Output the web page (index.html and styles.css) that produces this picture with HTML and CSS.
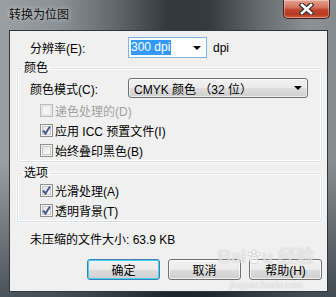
FILE: index.html
```html
<!DOCTYPE html>
<html lang="zh">
<head>
  <meta charset="UTF-8" />
  <title>转换为位图</title>
  <link rel="stylesheet" href="styles.css">
</head>
<body>
  <div class="window">
    <div class="titlebar">
      <span class="title">转换为位图</span>
      <button class="close">
        <svg width="15" height="12" viewBox="0 0 15 12">
          <path d="M3 2 L12 10 M12 2 L3 10" stroke="#3a3030" stroke-width="5" stroke-linecap="square" />
          <path d="M3 2 L12 10 M12 2 L3 10" stroke="#fff" stroke-width="2.6" stroke-linecap="square" />
        </svg>
      </button>
    </div>

    <div class="client">
      <div class="row res-row">
        <span class="label">分辨率(E):</span>
        <div class="combo-edit">
          <span class="sel-text">300 dpi</span>
          <span class="arrow"></span>
        </div>
        <span class="unit">dpi</span>
      </div>

      <fieldset class="group">
        <legend>颜色</legend>
        <div class="row mode-row">
          <span class="label">颜色模式(C):</span>
          <div class="combo-btn">
            <span>CMYK 颜色 （32 位）</span>
            <span class="arrow"></span>
          </div>
        </div>
        <div class="checks">
          <label class="check disabled"><span class="box"></span>递色处理的(D)</label>
          <label class="check">
            <span class="box">
              <svg width="11" height="11" viewBox="0 0 11 11"><path d="M2 5.5 L4.5 8.5 L9 1.5" fill="none" stroke="#4a5c8c" stroke-width="2" /></svg>
            </span>应用 ICC 预置文件(I)
          </label>
          <label class="check"><span class="box"></span>始终叠印黑色(B)</label>
        </div>
      </fieldset>

      <fieldset class="group options">
        <legend>选项</legend>
        <div class="checks">
          <label class="check">
            <span class="box">
              <svg width="11" height="11" viewBox="0 0 11 11"><path d="M2 5.5 L4.5 8.5 L9 1.5" fill="none" stroke="#4a5c8c" stroke-width="2" /></svg>
            </span>光滑处理(A)
          </label>
          <label class="check">
            <span class="box">
              <svg width="11" height="11" viewBox="0 0 11 11"><path d="M2 5.5 L4.5 8.5 L9 1.5" fill="none" stroke="#4a5c8c" stroke-width="2" /></svg>
            </span>透明背景(T)
          </label>
        </div>
      </fieldset>

      <div class="size-text">未压缩的文件大小: 63.9 KB</div>

      <div class="buttons">
        <button class="btn default">确定</button>
        <button class="btn">取消</button>
        <button class="btn">帮助(H)</button>
      </div>

      <!-- 水印 -->
      <div class="watermark">
        <span class="wm-big">Bai<svg class="paw" width="16" height="16" viewBox="0 0 16 16">
            <circle cx="4" cy="5" r="2" /><circle cx="8" cy="3" r="2" /><circle cx="12" cy="5" r="2" />
            <ellipse cx="8" cy="11" rx="4.5" ry="3.5" />
          </svg>u 经验</span>
        <span class="wm-small">jingyan.baidu.com</span>
      </div>
    </div>
  </div>
</body>
</html>
```

FILE: styles.css
```css
* {
  box-sizing: border-box;
}

body {
  margin: 0;
  width: 336px;
  height: 297px;
  overflow: hidden;
  font-family: "Liberation Sans", "Noto Sans CJK SC", sans-serif;
  font-size: 12px;
  color: #000;
}

.window {
  width: 336px;
  height: 297px;
  display: flex;
  flex-direction: column;
  background:
    linear-gradient(to bottom, rgba(0, 0, 0, 0) 0%, rgba(0, 0, 0, 0) 55%, rgba(10, 20, 30, 0.55) 100%),
    linear-gradient(to right, #9a9fa3 0%, #8a9094 18%, #5f656a 35%, #33383d 50%, #353a3f 62%, #676c71 78%, #8c9195 92%, #868b8f 100%);
}

.titlebar {
  height: 30px;
  display: flex;
  justify-content: space-between;
  align-items: flex-start;
}

.title {
  padding: 8px 0 0 9px;
  line-height: 14px;
  font-size: 12px;
  color: #101010;
  text-shadow: 0 0 5px rgba(255, 255, 255, 0.7);
}

.close {
  margin-right: 6px;
  width: 47px;
  height: 19px;
  padding: 0;
  border: 1px solid #3d2420;
  border-top: none;
  border-radius: 0 0 5px 5px;
  background: linear-gradient(to bottom, #e7a190 0%, #d47561 40%, #c0442c 55%, #b83a22 80%, #d0603f 100%);
  box-shadow: inset 0 0 0 1px rgba(255, 255, 255, 0.35);
  display: flex;
  align-items: center;
  justify-content: center;
}

.client {
  margin: 0 8px 5px 9px;
  flex: 1;
  border: 1px solid #30363c;
  background: #f0f0f0;
  padding: 0 5px 0 7px;
  display: flex;
  flex-direction: column;
  position: relative;
  overflow: hidden;
}

.row {
  display: flex;
  align-items: center;
}

.label {
  width: 98px;
  flex-shrink: 0;
}

.res-row {
  margin-top: 6px;
  height: 21px;
  padding-left: 13px;
}

.combo-edit {
  width: 79px;
  height: 21px;
  border: 1px solid #7eb4ea;
  background: #fff;
  display: flex;
  align-items: center;
  justify-content: space-between;
  padding: 0 5px 0 2px;
}

.sel-text {
  background: #3399ff;
  color: #fff;
  line-height: 15px;
  padding-right: 1px;
}

.arrow {
  width: 0;
  height: 0;
  border-left: 4px solid transparent;
  border-right: 4px solid transparent;
  border-top: 4px solid #000;
}

.unit {
  margin-left: 6px;
}

.group {
  margin: 3px 0 0 0;
  padding: 0;
  width: 305px;
  border: 1px solid #d5dfe5;
  border-radius: 3px;
  box-shadow: inset 0 0 0 1px #fff, 0 0 0 1px rgba(255, 255, 255, 0.7);
}

.group legend {
  margin-left: 4px;
  padding: 0 2px;
  line-height: 14px;
}

.mode-row {
  margin-top: 3px;
  padding-left: 12px;
  height: 20px;
}

.combo-btn {
  width: 180px;
  height: 20px;
  border: 1px solid #707070;
  border-radius: 3px;
  background: linear-gradient(to bottom, #f2f2f2 0%, #ebebeb 50%, #dddddd 51%, #cfcfcf 100%);
  box-shadow: inset 0 0 0 1px rgba(255, 255, 255, 0.6);
  display: flex;
  align-items: center;
  justify-content: space-between;
  padding: 0 5px 0 5px;
}

.checks {
  display: flex;
  flex-direction: column;
  gap: 1px;
  padding: 3px 0 1px 22px;
}

.check {
  height: 19px;
  display: flex;
  align-items: center;
  gap: 2px;
}

.check .box {
  width: 13px;
  height: 13px;
  border: 1px solid #8e8f8f;
  background: linear-gradient(135deg, #dcdcdc 0%, #f4f4f4 60%, #fdfdfd 100%);
  box-shadow: inset 0 0 0 1px #f4f4f4, inset 0 0 0 2px #c8c8c8;
  display: flex;
  align-items: center;
  justify-content: center;
}

.check.disabled {
  color: #a0a0a0;
}

.check.disabled .box {
  border-color: #bcbcbc;
  background: #f4f4f4;
  box-shadow: inset 0 0 0 2px #e6e6e6;
}

.options {
  margin-top: 4px;
}

.options .checks {
  padding-top: 1px;
}

.size-text {
  margin-top: 11px;
  padding-left: 13px;
  line-height: 14px;
}

.buttons {
  margin-top: 12px;
  width: 305px;
  display: flex;
  justify-content: flex-end;
  gap: 8px;
}

.btn {
  width: 73px;
  height: 21px;
  padding: 0;
  font: inherit;
  border: 1px solid #707070;
  border-radius: 3px;
  background: linear-gradient(to bottom, #f2f2f2 0%, #ebebeb 50%, #dddddd 51%, #cfcfcf 100%);
  box-shadow: inset 0 0 0 1px rgba(255, 255, 255, 0.7);
}

.btn.default {
  border-color: #3c7fb1;
  box-shadow: inset 0 0 0 1px #48d0f5;
}

.watermark {
  position: absolute;
  left: 208px;
  top: 215px;
  display: flex;
  flex-direction: column;
  align-items: center;
  color: rgba(255, 255, 255, 0.6);
  text-shadow: 0 0 1px rgba(140, 140, 140, 0.5);
  pointer-events: none;
}

.wm-big {
  display: flex;
  align-items: center;
  font-size: 18px;
  font-weight: bold;
  line-height: 22px;
}

.paw {
  fill: rgba(255, 255, 255, 0.6);
  stroke: rgba(140, 140, 140, 0.5);
  stroke-width: 0.6;
}

.wm-small {
  margin-top: 12px;
  font-size: 9px;
  line-height: 10px;
}
```
